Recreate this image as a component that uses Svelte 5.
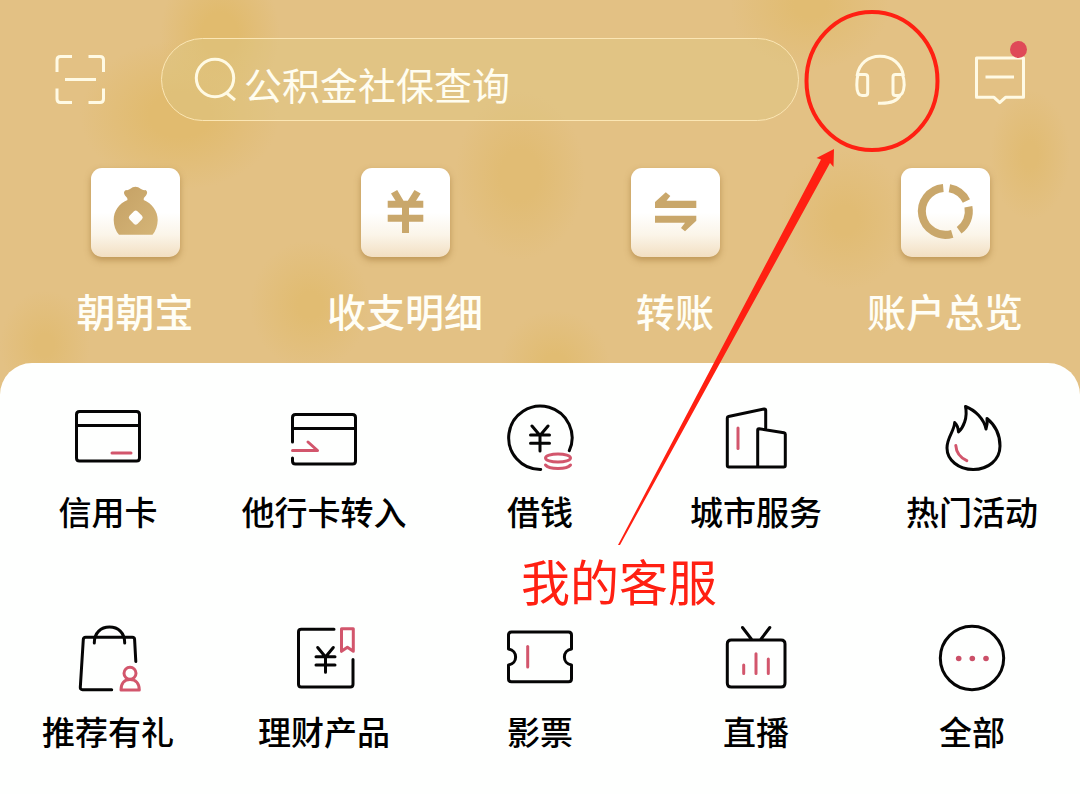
<script>
  const quick = [
    { id: 'bag', label: '朝朝宝' },
    { id: 'yen', label: '收支明细' },
    { id: 'transfer', label: '转账' },
    { id: 'ring', label: '账户总览' }
  ];

  // `ink` paths are drawn in black, `accent` paths in rose.
  const services = [
    {
      label: '信用卡',
      ink: 'M11.5 13.5H68.5Q71.5 13.5 71.5 16.5V60Q71.5 63 68.5 63H11.5Q8.5 63 8.5 60V16.5Q8.5 13.5 11.5 13.5ZM8.5 27.5H71.5',
      accent: 'M44 55H63'
    },
    {
      label: '他行卡转入',
      ink: 'M8.5 44V19.5Q8.5 16.5 11.5 16.5H68.5Q71.5 16.5 71.5 19.5V63Q71.5 66 68.5 66H11.5Q8.5 66 8.5 63V60M8.5 30.5H71.5',
      accent: 'M8.5 52.5H33.5L24 44'
    },
    {
      label: '借钱',
      ink: 'M69.3 52.7A31.7 31.7 0 1 0 40.7 71.4M32 28L40 37.5L48 28M30.5 37H49.5M30.5 45.3H49.5M40 37.5V53',
      accent: 'M45.5 60A12.5 4 0 1 0 70.5 60A12.5 4 0 1 0 45.5 60ZM45.5 67C49 71.7 67 71.7 70.5 67'
    },
    {
      label: '城市服务',
      ink: 'M41.7 69H13Q11.3 69 11.3 67.3V20Q11.3 18.8 12.5 18.5L48 11Q49.7 10.7 49.7 12.3V31.5M41.7 69V32Q41.7 30.5 43.2 30.7L68 34.7Q69.3 35 69.3 36.3V67.3Q69.3 69 67.6 69Z',
      accent: 'M22 30V50.5'
    },
    {
      label: '热门活动',
      ink: 'M33.5 8.5C43 12 52 21 54 31Q55.7 26 55 20.5C63 27 68 37 68 48C68 62 56 71.5 41.3 71.5C26.5 71.5 15 62 15 50C15 39 22 34 22.7 24.5Q26 27.5 26.5 34C31 30 36 20 33.5 8.5Z',
      accent: 'M23.8 47.5Q24.5 58 34.8 62.6'
    },
    {
      label: '推荐有礼',
      ink: 'M43.7 71.7H14.5Q12.2 71.7 12.3 69.3L15.3 21.5Q15.5 19.3 17.7 19.3H64.3Q66.5 19.3 66.6 21.5L67.8 43.5M26.3 25C26.3 14.5 33 9 41.5 9S56.7 14.5 56.7 25',
      accent: 'M56 55.3A6 6 0 1 0 68 55.3A6 6 0 1 0 56 55.3ZM53 72C53 65.5 56.5 61.5 62 61.5S71.3 65.5 71.3 72Z'
    },
    {
      label: '理财产品',
      ink: 'M50 11.3H17.3Q14.5 11.3 14.5 14V66.3Q14.5 69 17.3 69H66.3Q69 69 69 66.3V41.5M33.7 29.5L41.5 39L49.3 29.5M32 38.7H51M32 47H51M41.5 39V54.3',
      accent: 'M57.5 10.8H69.3V33.3L63.4 29.3L57.5 33.3Z'
    },
    {
      label: '影票',
      ink: 'M8.5 31V17Q8.5 14 11.5 14H68.5Q71.5 14 71.5 17V31C62 32.5 62 45.5 71.5 47V60.7Q71.5 63.7 68.5 63.7H11.5Q8.5 63.7 8.5 60.7V47C18 45.5 18 32.5 8.5 31Z',
      accent: 'M27.7 28.5V49'
    },
    {
      label: '直播',
      ink: 'M15.3 22H65Q69 22 69 26V65Q69 69 65 69H15.3Q11.3 69 11.3 65V26Q11.3 22 15.3 22ZM26.5 9.5L35.7 21.5M53.8 9.5L44.7 21.5',
      accent: 'M27.7 47V55.5M40 35.7V55.5M52.3 41V55.5'
    },
    {
      label: '全部',
      ink: 'M8.3 40A31.7 31.7 0 1 0 71.7 40A31.7 31.7 0 1 0 8.3 40Z',
      dots: [26.7, 40.3, 54]
    }
  ];
</script>

<main class="page">
  <header class="hero">
    <div class="topbar">
      <button class="tool" aria-label="扫一扫">
        <svg viewBox="0 0 50 50">
          <path d="M2 17V5Q2 1.5 5.5 1.5H17M33.5 1.5H45Q48.5 1.5 48.5 5V17M48.5 33.5V44Q48.5 47.5 45 47.5H33.5M17 47.5H5.5Q2 47.5 2 44V33.5M10 24.5H41" />
        </svg>
      </button>

      <label class="search">
        <svg viewBox="0 0 44 44">
          <circle cx="21" cy="20" r="18.7" />
          <path d="M32 34.5L41 42" />
        </svg>
        <input type="text" aria-label="搜索" placeholder="公积金社保查询" />
      </label>

      <div class="tools">
        <button class="tool" aria-label="客服">
          <svg viewBox="0 0 50 50">
            <path d="M2 21C4 8.500 13 1.300 25 1.300S46.500 8.500 48.500 21" />
            <path d="M4.500 19.500H10Q12.700 19.500 12.700 22V38Q12.700 40.500 10 40.500H7Q1.800 40.500 1.800 30Q1.800 24 3 19.500ZM40.500 19.500H47.500Q49.200 24 49.200 30Q48.500 40.500 43.500 40.500H40.500Q38 40.500 38 38V22Q38 19.500 40.500 19.500ZM45 40.500C42 46.500 35 48.800 23 48.200" />
          </svg>
        </button>
        <button class="tool" aria-label="消息">
          <svg viewBox="0 0 50 50">
            <path d="M1.500 3H48.500V42.300H30.500L24.700 47.700L19 42.300H1.500ZM10.500 22H39" />
          </svg>
          <span class="badge"></span>
        </button>
      </div>
    </div>

    <nav class="quick">
      {#each quick as item}
        <button class="entry">
          <span class="tile">
            <svg viewBox="0 0 89 89">
              <defs>
                <linearGradient id={`gold-${item.id}`} x1="0" y1="0" x2="1" y2="1">
                  <stop offset="0" stop-color="#c4a064" />
                  <stop offset="1" stop-color="#d5b578" />
                </linearGradient>
              </defs>
              {#if item.id === 'bag'}
                <path
                  fill={`url(#gold-${item.id})`}
                  fill-rule="evenodd"
                  d="M36.500 32Q36.500 29.500 34 27.500Q31.500 23.500 35 22Q37 22.500 39 21Q44.300 16.500 50 21Q52 22.500 54.500 22Q57.500 23.500 55 27.500Q52.500 29.500 52.700 32C61 35.500 66.700 43 66.700 52Q66.500 61 61.500 66.700H28Q22.800 61 22.700 52C22.700 43 28 35.500 36.500 32ZM43 43.300L38.500 47.800Q37 49.500 38.500 51.200L43 56Q44.700 57.500 46.400 56L51 51.200Q52.500 49.500 51 47.800L46.400 43.300Q44.700 41.800 43 43.300Z"
                />
              {:else if item.id === 'yen'}
                <path
                  fill="#c9a76b"
                  d="M30 25.500L36.200 22L42.500 32.700H46.800L53.500 22L59.700 25.500L55 32.700H62.300V39.700H48V46.700H62.300V53.700H48V65H41V53.700H26.700V46.700H41V39.700H26.700V32.700H34.500Z"
                />
              {:else if item.id === 'transfer'}
                <path
                  fill="#c9a76b"
                  d="M24 40V34L34.800 24.300L39.300 28L35.500 32.700H65.300V40ZM24 47.700H65.300V52.700L54 63.300L50 60L54 54.700H24Z"
                />
              {:else}
                <path
                  fill="none"
                  stroke="#c9a76b"
                  stroke-width="8"
                  d="M48.400 20.200A23.500 23.500 0 0 1 65.400 33M67.400 38.800A23.500 23.500 0 0 1 58.100 62.300M51.200 65.800A23.500 23.500 0 1 1 42.300 19.900"
                />
              {/if}
            </svg>
          </span>
          <span class="entry-label">{item.label}</span>
        </button>
      {/each}
    </nav>
  </header>

  <section class="panel">
    {#each services as item}
      <button class="service">
        <svg viewBox="0 0 80 80">
          <path class="ink" d={item.ink} />
          {#if item.accent}
            <path class="accent" d={item.accent} />
          {/if}
          {#each item.dots ?? [] as x}
            <circle class="dot" cx={x} cy="40.500" r="2.800" />
          {/each}
        </svg>
        <span class="service-label">{item.label}</span>
      </button>
    {/each}
  </section>

  <div class="callout">
    <svg viewBox="0 0 440 560">
      <ellipse cx="372" cy="81" rx="65.500" ry="69" />
      <polygon points="118,545 321,159.500 316.500,158 334,149 333.500,167 330,163 120,545" />
    </svg>
    <p>我的客服</p>
  </div>
</main>

<style>
  :global(body) {
    margin: 0;
    background: #fefffe;
  }

  .page {
    position: relative;
    min-height: 100vh;
    overflow: hidden;
    font-family: 'Noto Sans CJK SC', 'Noto Sans', sans-serif;
    background: #fefffe;
  }

  button {
    padding: 0;
    border: 0;
    background: none;
    font: inherit;
    color: inherit;
    cursor: pointer;
  }

  svg {
    display: block;
  }

  .hero {
    padding: 38px 0 61px;
    background:
      radial-gradient(closest-side, #e1bb6f 30%, transparent) 80px 40px / 200px 150px no-repeat,
      radial-gradient(closest-side, #e1bb6e 30%, transparent) 160px -40px / 120px 150px no-repeat,
      radial-gradient(closest-side, #e1bc74 30%, transparent) 455px 90px / 130px 170px no-repeat,
      radial-gradient(closest-side, #e1bc72 20%, transparent) 250px 240px / 120px 130px no-repeat,
      radial-gradient(closest-side, #e1bc72 20%, transparent) 730px -60px / 160px 130px no-repeat,
      radial-gradient(closest-side, #e1bc74 20%, transparent) 780px 150px / 130px 140px no-repeat,
      radial-gradient(closest-side, #e1bc72 20%, transparent) 500px 310px / 110px 110px no-repeat,
      radial-gradient(closest-side, #e1bc74 20%, transparent) 0 290px / 90px 110px no-repeat,
      radial-gradient(closest-side, #e1bc74 20%, transparent) 990px 90px / 80px 130px no-repeat,
      #e3c184;
  }

  .topbar {
    display: flex;
    align-items: center;
    gap: 56px;
    padding: 0 55px;
  }

  .tools {
    display: flex;
    gap: 70px;
  }

  .tool {
    position: relative;
    flex: none;
    width: 50px;
    height: 50px;
  }

  .tool svg,
  .search svg {
    overflow: visible;
    fill: none;
    stroke: #fffae4;
    stroke-width: 3;
    stroke-linejoin: round;
  }

  .badge {
    position: absolute;
    top: -14px;
    right: -2px;
    width: 17px;
    height: 17px;
    border-radius: 50%;
    background: #df4a58;
  }

  .search {
    display: flex;
    flex: 1;
    align-items: center;
    gap: 6px;
    box-sizing: border-box;
    min-width: 0;
    height: 83px;
    padding: 0 32px;
    border: 1px solid #fbe6b4;
    border-radius: 42px;
    background: rgba(222, 200, 132, 0.45);
  }

  .search svg {
    flex: none;
    width: 44px;
    height: 44px;
  }

  .search input {
    flex: 1;
    min-width: 0;
    padding: 8px 0 0;
    border: 0;
    outline: 0;
    background: none;
    font: inherit;
    font-size: 38px;
    line-height: 56px;
    color: #fffdf0;
  }

  .search input::placeholder {
    color: #fffdf0;
    opacity: 1;
  }

  .quick {
    display: grid;
    grid-template-columns: repeat(4, 1fr);
    padding-top: 47px;
  }

  .entry {
    display: flex;
    flex-direction: column;
    align-items: center;
    gap: 29px;
    color: #fffef6;
  }

  .tile {
    width: 89px;
    height: 89px;
    border-radius: 11px;
    background: linear-gradient(#ffffff 50%, #fbf5e9 75%, #f2dfc2);
    box-shadow: 0 3px 6px rgba(150, 105, 40, 0.5);
  }

  .entry-label {
    font-size: 39px;
    font-weight: 500;
    line-height: 48px;
  }

  .panel {
    display: grid;
    grid-template-columns: repeat(5, 1fr);
    row-gap: 87px;
    margin-top: -32px;
    padding: 35px 0 40px;
    border-radius: 32px 32px 0 0;
    background: #fefffe;
  }

  .service {
    display: flex;
    flex-direction: column;
    align-items: center;
    gap: 13px;
    color: #000;
  }

  .service svg {
    width: 80px;
    height: 80px;
    fill: none;
    stroke-width: 3;
    stroke-linecap: round;
    stroke-linejoin: round;
  }

  .ink {
    stroke: #050505;
  }

  .accent {
    stroke: #d2566c;
  }

  .dot {
    fill: #cb5068;
  }

  .service-label {
    font-size: 33px;
    font-weight: 500;
    line-height: 40px;
    white-space: nowrap;
  }

  .callout {
    position: absolute;
    top: 0;
    right: 140px;
    width: 440px;
    color: #ff2012;
    pointer-events: none;
  }

  .callout ellipse {
    fill: none;
    stroke: currentColor;
    stroke-width: 4;
  }

  .callout polygon {
    fill: currentColor;
  }

  .callout p {
    margin: -16px 0 0 21px;
    font-size: 49px;
    line-height: 72px;
  }
</style>
